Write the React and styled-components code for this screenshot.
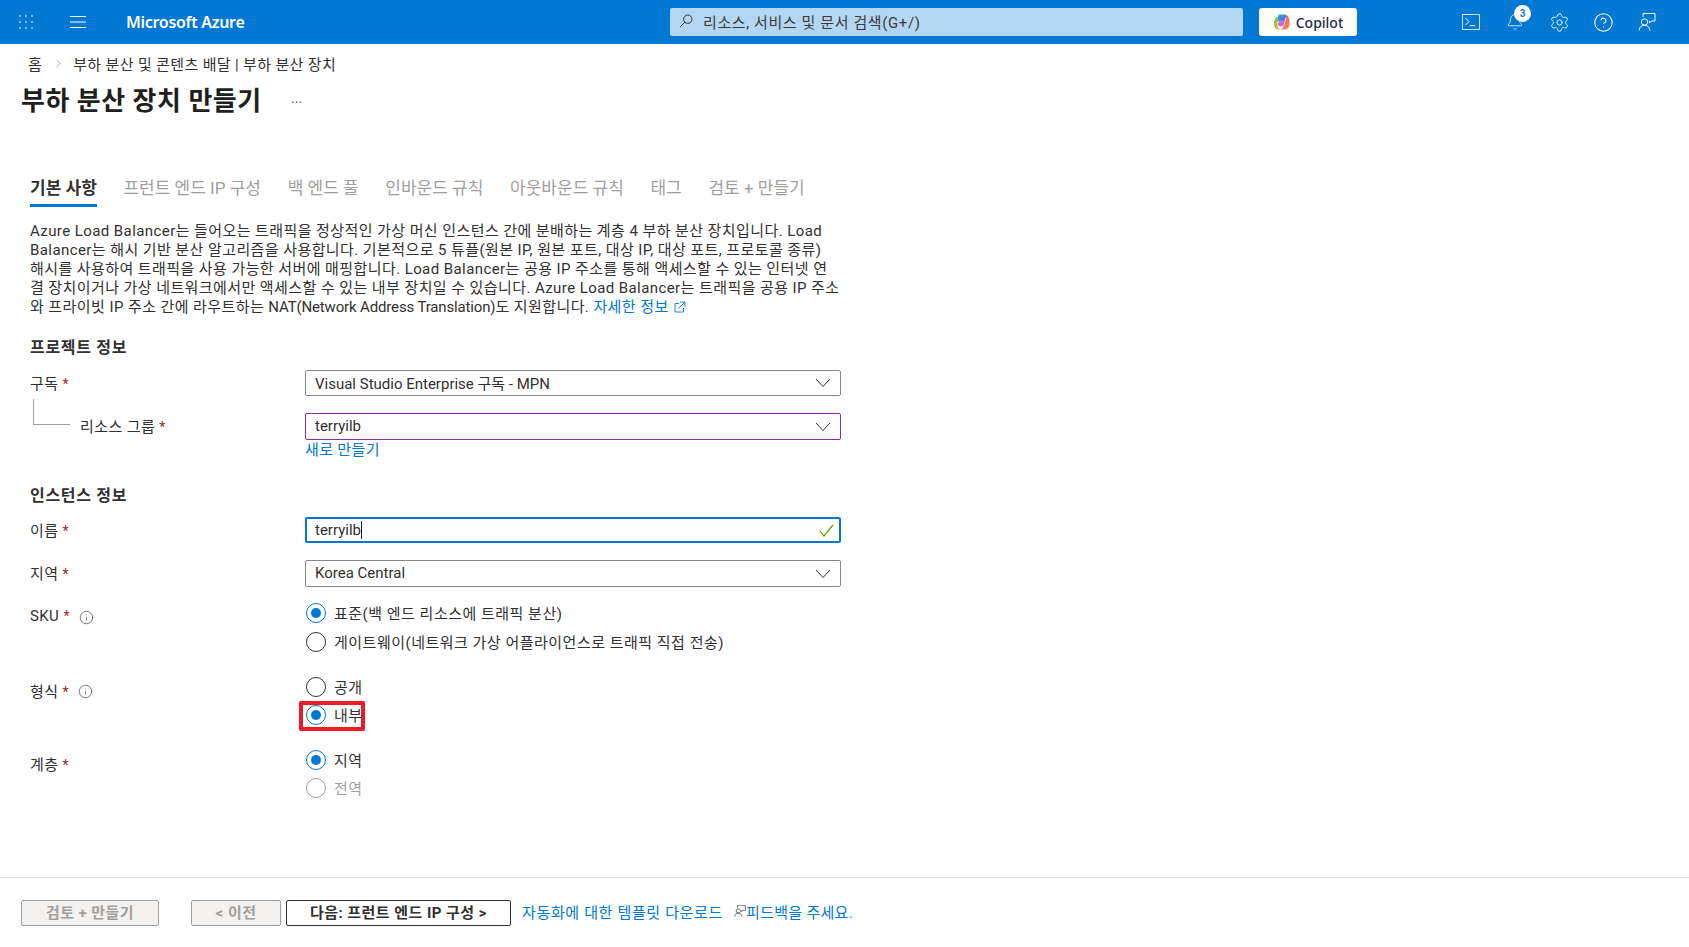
import React from "react";
import styled, { createGlobalStyle } from "styled-components";
import { Settings, CircleHelp, Bell, ChevronRight, Info } from "lucide-react";

const GlobalStyle = createGlobalStyle`
  html, body { margin: 0; padding: 0; height: 100%; background: #fff; }
  body {
    font-family: Roboto, "Noto Sans CJK KR", sans-serif;
    font-size: 15px;
    color: #323130;
  }
  * { box-sizing: border-box; }
`;

const Page = styled.div`
  display: flex;
  flex-direction: column;
  height: 947px;
  overflow: hidden;
`;

const TopBar = styled.header`
  display: flex;
  align-items: center;
  flex: none;
  height: 44px;
  padding-right: 20px;
  background: #0078d4;
  color: #fff;
`;

const BrandGroup = styled.div`
  display: flex;
  align-items: center;
  flex: none;
  width: 670px;
  padding-left: 18px;
`;

const Brand = styled.span`
  margin-left: 40px;
  font-family: "Noto Sans", sans-serif;
  font-size: 16px;
  font-weight: 600;
  letter-spacing: -0.3px;
`;

const HamburgerWrap = styled.span`
  display: flex;
  margin-left: 36px;
`;

const SearchBox = styled.div`
  display: flex;
  align-items: center;
  gap: 10px;
  flex: none;
  width: 573px;
  height: 28px;
  padding: 0 0 2px 9px;
  border-radius: 2px;
  background: #b3d6f2;
  color: #3b3a39;
  font-size: 15px;
  letter-spacing: 0.6px;
`;

const CopilotButton = styled.div`
  display: flex;
  align-items: center;
  justify-content: center;
  gap: 5px;
  flex: none;
  width: 98px;
  height: 28px;
  margin-left: 16px;
  border-radius: 3px;
  background: #fff;
  color: #242a4a;
  font-family: "Noto Sans", sans-serif;
  font-size: 14px;
  font-weight: 500;
`;

const IconRow = styled.div`
  display: flex;
  margin-left: auto;
`;

const IconButton = styled.div`
  position: relative;
  display: flex;
  align-items: center;
  justify-content: center;
  width: 44px;
  height: 44px;
`;

const Badge = styled.span`
  position: absolute;
  top: 5px;
  left: 21px;
  display: flex;
  align-items: center;
  justify-content: center;
  width: 17px;
  height: 17px;
  border-radius: 50%;
  background: #fff;
  color: #0078d4;
  font-size: 10px;
  font-weight: 600;
`;

const Breadcrumb = styled.nav`
  display: flex;
  align-items: center;
  height: 20px;
  margin: 9px 0 0 28px;
  font-size: 15px;
  letter-spacing: 0.35px;
`;

const Crumb = styled.span`
  display: flex;
  margin: 0 8px 0 10px;
  color: #605e5c;
`;

const TitleRow = styled.div`
  display: flex;
  align-items: center;
  height: 36px;
  margin: 7px 0 0 21px;
`;

const Title = styled.h1`
  margin: 0;
  font-size: 26px;
  font-weight: 700;
  color: #201f1e;
  letter-spacing: 0.5px;
`;

const Ellipsis = styled.span`
  margin-left: 29px;
  font-size: 15px;
  color: #605e5c;
`;

const Content = styled.main`
  flex: 1;
  width: 900px;
  padding-left: 30px;
`;

const Tabs = styled.div`
  display: flex;
  gap: 26.7px;
  height: 37px;
  margin-top: 54px;
`;

const Tab = styled.div`
  height: 37px;
  padding-top: 4px;
  border-bottom: 3px solid ${(p) => (p.$active ? "#0078d4" : "transparent")};
  color: ${(p) => (p.$active ? "#323130" : "#a19f9d")};
  font-size: 17px;
  font-weight: ${(p) => (p.$active ? 600 : 400)};
  white-space: nowrap;
`;

const Description = styled.p`
  margin: 15px 0 0;
  font-size: 15px;
  line-height: 19px;
  white-space: nowrap;
  letter-spacing: 0.42px;
`;

const TightRun = styled.span`
  letter-spacing: -0.15px;
`;

const Link = styled.a`
  color: #0078d4;
  text-decoration: none;
`;

const CreateLink = styled(Link)`
  display: block;
  margin-top: -2px;
  letter-spacing: 0.35px;
`;

const Heading = styled.h2`
  height: 20px;
  margin: ${(p) => p.$top}px 0 ${(p) => p.$bottom}px;
  font-size: 16px;
  font-weight: 700;
  line-height: 20px;
  letter-spacing: 0.7px;
`;

const FieldRow = styled.div`
  display: grid;
  grid-template-columns: 275px 536px;
  margin-top: ${(p) => p.$top || 0}px;
`;

const Label = styled.div`
  position: relative;
  display: flex;
  align-items: center;
  gap: 5px;
  height: 26px;
  margin-top: ${(p) => (p.$radio ? 3 : 0)}px;
  padding-left: ${(p) => (p.$child ? 50 : 0)}px;
  padding-bottom: 2px;
  font-size: 15px;
  letter-spacing: 0.4px;

  ${(p) =>
    p.$child &&
    `&::before {
      content: "";
      position: absolute;
      left: 3px;
      top: -14px;
      width: 36px;
      height: 25px;
      border-left: 1px solid #a19f9d;
      border-bottom: 1px solid #a19f9d;
    }`}
`;

const Star = styled.span`
  color: #a4262c;
  font-size: 14px;
`;

const Select = styled.div`
  display: flex;
  align-items: center;
  justify-content: space-between;
  height: ${(p) => p.$height || 26}px;
  padding: 0 ${(p) => (p.$focus ? 5 : 9)}px 0 ${(p) => (p.$focus ? 8 : 9)}px;
  border: ${(p) => (p.$focus ? "2px solid #0078d4" : `1px solid ${p.$accent || "#8a8886"}`)};
  border-radius: 2px;
  font-size: 15px;
  color: #323130;
`;

const Value = styled.span`
  display: flex;
  align-items: center;
  margin-bottom: ${(p) => (p.$typed ? 0 : 1)}px;
`;

const Caret = styled.span`
  display: inline-block;
  width: 1px;
  height: 18px;
  background: #201f1e;
`;

const RadioList = styled.div`
  display: flex;
  flex-direction: column;
  gap: ${(p) => p.$gap || 5}px;
`;

const RadioRow = styled.div`
  position: relative;
  display: flex;
  align-items: center;
  gap: 8px;
  height: 24px;
  color: ${(p) => (p.$disabled ? "#a19f9d" : "#323130")};
  font-size: 15px;
  letter-spacing: 0.5px;
`;

const RadioText = styled.span`
  margin-bottom: 2px;
`;

const RadioMark = styled.span`
  position: relative;
  flex: none;
  width: 20px;
  height: 20px;
  margin-left: 1px;
  border-radius: 50%;
  border: 1px solid ${(p) => (p.$checked ? "#0078d4" : p.$disabled ? "#a19f9d" : "#323130")};

  &::after {
    content: "";
    display: ${(p) => (p.$checked ? "block" : "none")};
    position: absolute;
    top: 4px;
    left: 4px;
    width: 10px;
    height: 10px;
    border-radius: 50%;
    background: #0078d4;
  }
`;

const Highlight = styled.span`
  position: absolute;
  top: -2px;
  left: -6px;
  width: 66px;
  height: 30px;
  border: 4px solid #ed1c24;
  border-radius: 2px;
`;

const Footer = styled.footer`
  display: flex;
  align-items: flex-start;
  flex: none;
  height: 70px;
  padding: 22px 0 0 21px;
  border-top: 1px solid #e1dfdd;
`;

const FooterButton = styled.div`
  display: flex;
  align-items: center;
  justify-content: center;
  width: ${(p) => p.$width}px;
  height: 26px;
  margin-left: ${(p) => p.$left || 0}px;
  padding-bottom: 3px;
  border: 1px solid ${(p) => (p.$disabled ? "#a19f9d" : "#323130")};
  border-radius: 2px;
  background: ${(p) => (p.$disabled ? "#f3f2f1" : "#fff")};
  color: ${(p) => (p.$disabled ? "#a19f9d" : "#323130")};
  font-size: 15px;
  font-weight: 700;
  letter-spacing: 0.45px;
`;

const FooterLinks = styled.div`
  display: flex;
  align-items: center;
  height: 22px;
  margin-left: 11px;
  font-size: 15px;
  letter-spacing: 0.65px;
`;

const FeedbackLink = styled(Link)`
  display: flex;
  align-items: center;
  margin-left: 11px;
  letter-spacing: 0.3px;
`;

const dots = [];
for (let y = 0; y < 3; y++) for (let x = 0; x < 3; x++) dots.push([x * 6 + 2, y * 6 + 2]);

const GridIcon = () => (
  <svg width="16" height="16" viewBox="0 0 16 16" fill="#fff">
    {dots.map(([x, y]) => (
      <rect key={`${x}-${y}`} x={x - 0.7} y={y - 0.7} width="1.4" height="1.4" />
    ))}
  </svg>
);

const HamburgerIcon = () => (
  <svg width="16" height="14" viewBox="0 0 16 14" stroke="#fff" strokeWidth="1">
    <path d="M0 1.5h16M0 7h16M0 12.5h16" />
  </svg>
);

const SearchIcon = () => (
  <svg width="14" height="14" viewBox="0 0 14 14" fill="none" stroke="#323130" strokeWidth="1">
    <circle cx="8.8" cy="5.2" r="4.2" />
    <path d="M5.8 8.2L1 13" />
  </svg>
);

const CopilotLogo = () => (
  <svg width="18" height="18" viewBox="0 0 18 18">
    <defs>
      <linearGradient id="cpA" x1="0" y1="0" x2="1" y2="1">
        <stop offset="0" stopColor="#1fb6e8" />
        <stop offset="1" stopColor="#3b5fe0" />
      </linearGradient>
      <linearGradient id="cpB" x1="0" y1="0" x2="1" y2="1">
        <stop offset="0" stopColor="#e8559c" />
        <stop offset="1" stopColor="#f5902c" />
      </linearGradient>
      <linearGradient id="cpC" x1="0" y1="0" x2="1" y2="1">
        <stop offset="0" stopColor="#6fc24a" />
        <stop offset="1" stopColor="#f5c52c" />
      </linearGradient>
    </defs>
    <path d="M6 1.500h5.500c1 0 1.600.5 1.900 1.400L11 8 7 7.500 4 9l1-5.500C5.200 2.300 5.500 1.500 6 1.500z" fill="url(#cpA)" />
    <path d="M1 12c-.5-2 .5-5 1.500-7 .4-.8 1-1.300 2.300-1.300L4.500 11c-.2 2 1 4.500 3 5.500H4.500C2.500 16.500 1.400 14 1 12z" fill="url(#cpC)" />
    <path d="M12 1.800c2 .2 3 1 3.800 3 .8 2.500 1.200 5 .5 8-.4 1.700-1.800 3.700-4 3.700H7.500c1.500-.3 2.800-1.800 3.300-3.500L13 6c.3-1.500-.2-3.200-1-4.200z" fill="url(#cpB)" />
    <path d="M12.500 5.500L11 11c-.4 1.500-1.500 2.500-3 2.500-1.800 0-3-1-3.200-2.500L6.500 7.500z" fill="#c04fd8" opacity="0.85" />
  </svg>
);

const TerminalIcon = () => (
  <svg width="18" height="16" viewBox="0 0 18 16" fill="none" stroke="#fff" strokeWidth="1">
    <rect x="0.5" y="0.5" width="17" height="15" stroke="#cfe4f6" />
    <path d="M3.500 4l3.500 3.500L3.500 11M8 11.500h5" />
  </svg>
);

const FeedbackIcon = ({ size = 18, color = "#fff" }) => (
  <svg width={size} height={size} viewBox="0 0 18 18" fill="none" stroke={color} strokeWidth="1">
    <path d="M5 4V0.500h12V8h-3.500l-2 2V8" />
    <circle cx="6.500" cy="9" r="3.200" />
    <path d="M1 17.500c.3-3.400 2.500-5.300 5.500-5.300s5 2 5.500 5.300" />
  </svg>
);

const ChevronDown = () => (
  <svg width="16" height="10" viewBox="0 0 16 10" fill="none" stroke="#323130" strokeWidth="1">
    <path d="M1 1l7 7.500L15 1" />
  </svg>
);

const CheckIcon = () => (
  <svg width="15" height="13" viewBox="0 0 15 13" fill="none" stroke="#57a300" strokeWidth="1.200">
    <path d="M1 7l4 5L14 1" />
  </svg>
);

const OpenIconSvg = styled.svg`
  margin-left: 5px;
  vertical-align: -1px;
`;

const OpenIcon = () => (
  <OpenIconSvg width="12" height="12" viewBox="0 0 12 12" fill="none" stroke="#0078d4" strokeWidth="0.900">
    <path d="M5 2.500H1V11h8.500V7M6 1h5v5M11 1L4.500 7.500" />
  </OpenIconSvg>
);

const InfoMark = styled(Info)`
  margin: 2px 0 0 4px;
`;

const tabs = ["기본 사항", "프런트 엔드 IP 구성", "백 엔드 풀", "인바운드 규칙", "아웃바운드 규칙", "태그", "검토 + 만들기"];

const Required = ({ children, info }) => (
  <>
    <span>
      {children} <Star>*</Star>
    </span>
    {info && <InfoMark size={15} strokeWidth={1} color="#323130" />}
  </>
);

const Radio = ({ checked, disabled, marked, children }) => (
  <RadioRow $disabled={disabled}>
    <RadioMark $checked={checked} $disabled={disabled} />
    <RadioText>{children}</RadioText>
    {marked && <Highlight />}
  </RadioRow>
);

export default function App() {
  return (
    <Page>
      <GlobalStyle />
      <TopBar>
        <BrandGroup>
          <GridIcon />
          <HamburgerWrap>
            <HamburgerIcon />
          </HamburgerWrap>
          <Brand>Microsoft Azure</Brand>
        </BrandGroup>
        <SearchBox>
          <SearchIcon />
          리소스, 서비스 및 문서 검색(G+/)
        </SearchBox>
        <CopilotButton>
          <CopilotLogo />
          Copilot
        </CopilotButton>
        <IconRow>
          <IconButton>
            <TerminalIcon />
          </IconButton>
          <IconButton>
            <Bell size={18} strokeWidth={1} />
            <Badge>3</Badge>
          </IconButton>
          <IconButton>
            <Settings size={21} strokeWidth={1} />
          </IconButton>
          <IconButton>
            <CircleHelp size={21} strokeWidth={1.2} />
          </IconButton>
          <IconButton>
            <FeedbackIcon />
          </IconButton>
        </IconRow>
      </TopBar>

      <Breadcrumb>
        홈
        <Crumb>
          <ChevronRight size={13} strokeWidth={1} />
        </Crumb>
        부하 분산 및 콘텐츠 배달 | 부하 분산 장치
      </Breadcrumb>
      <TitleRow>
        <Title>부하 분산 장치 만들기</Title>
        <Ellipsis>...</Ellipsis>
      </TitleRow>

      <Content>
        <Tabs>
          {tabs.map((t, i) => (
            <Tab key={t} $active={i === 0}>
              {t}
            </Tab>
          ))}
        </Tabs>
        <Description>
          Azure Load Balancer는 들어오는 트래픽을 정상적인 가상 머신 인스턴스 간에 분배하는 계층 4 부하 분산 장치입니다. Load
          <br />
          Balancer는 해시 기반 분산 알고리즘을 사용합니다. 기본적으로 5 튜플(원본 IP, 원본 포트, 대상 IP, 대상 포트, 프로토콜 종류)
          <br />
          해시를 사용하여 트래픽을 사용 가능한 서버에 매핑합니다. Load Balancer는 공용 IP 주소를 통해 액세스할 수 있는 인터넷 연
          <br />
          결 장치이거나 가상 네트워크에서만 액세스할 수 있는 내부 장치일 수 있습니다. Azure Load Balancer는 트래픽을 공용 IP 주소
          <br />
          와 프라이빗 IP 주소 간에 라우트하는 <TightRun>NAT(Network Address Translation)</TightRun>도 지원합니다.{" "}
          <Link href="#">
            자세한 정보
            <OpenIcon />
          </Link>
        </Description>

        <Heading $top={21} $bottom={12}>
          프로젝트 정보
        </Heading>
        <FieldRow>
          <Label>
            <Required>구독</Required>
          </Label>
          <Select>
            <Value>Visual Studio Enterprise 구독 - MPN</Value>
            <ChevronDown />
          </Select>
        </FieldRow>
        <FieldRow $top={17}>
          <Label $child>
            <Required>리소스 그룹</Required>
          </Label>
          <div>
            <Select $accent="#8a2da5" $height={27}>
              <Value>terryilb</Value>
              <ChevronDown />
            </Select>
            <CreateLink href="#">새로 만들기</CreateLink>
          </div>
        </FieldRow>

        <Heading $top={27} $bottom={11}>
          인스턴스 정보
        </Heading>
        <FieldRow>
          <Label>
            <Required>이름</Required>
          </Label>
          <Select $focus>
            <Value $typed>
              terryilb
              <Caret />
            </Value>
            <CheckIcon />
          </Select>
        </FieldRow>
        <FieldRow $top={17}>
          <Label>
            <Required>지역</Required>
          </Label>
          <Select $height={27}>
            <Value>Korea Central</Value>
            <ChevronDown />
          </Select>
        </FieldRow>
        <FieldRow $top={14}>
          <Label $radio>
            <Required info>SKU</Required>
          </Label>
          <RadioList>
            <Radio checked>표준(백 엔드 리소스에 트래픽 분산)</Radio>
            <Radio>게이트웨이(네트워크 가상 어플라이언스로 트래픽 직접 전송)</Radio>
          </RadioList>
        </FieldRow>
        <FieldRow $top={21}>
          <Label $radio>
            <Required info>형식</Required>
          </Label>
          <RadioList $gap={4}>
            <Radio>공개</Radio>
            <Radio checked marked>
              내부
            </Radio>
          </RadioList>
        </FieldRow>
        <FieldRow $top={21}>
          <Label $radio>
            <Required>계층</Required>
          </Label>
          <RadioList $gap={4}>
            <Radio checked>지역</Radio>
            <Radio disabled>전역</Radio>
          </RadioList>
        </FieldRow>
      </Content>

      <Footer>
        <FooterButton $disabled $width={138}>
          검토 + 만들기
        </FooterButton>
        <FooterButton $disabled $width={90} $left={32}>
          &lt; 이전
        </FooterButton>
        <FooterButton $width={225} $left={5}>
          다음: 프런트 엔드 IP 구성 &gt;
        </FooterButton>
        <FooterLinks>
          <Link href="#">자동화에 대한 템플릿 다운로드</Link>
          <FeedbackLink href="#">
            <FeedbackIcon size={12} color="#323130" />
            피드백을 주세요.
          </FeedbackLink>
        </FooterLinks>
      </Footer>
    </Page>
  );
}
